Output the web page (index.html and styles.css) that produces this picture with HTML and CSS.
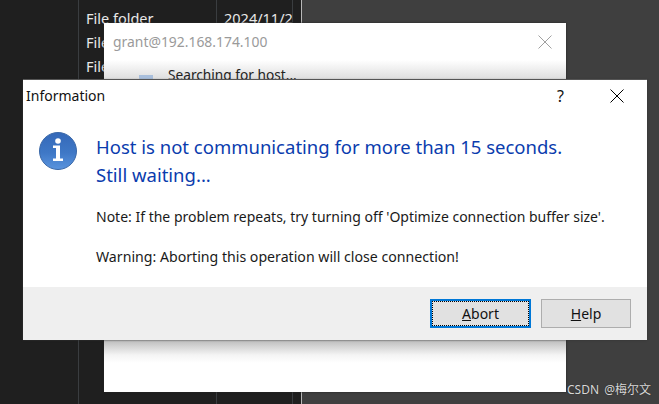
FILE: index.html
```html
<!DOCTYPE html>
<html>
<head>
    <title>Information</title>
    <link rel="stylesheet" href="styles.css">
</head>
<body>
    <div class="file-list">
        <div class="col col-type">
            <div class="cell">File folder</div>
            <div class="cell">File</div>
            <div class="cell">File</div>
        </div>
        <div class="col col-date">
            <div class="cell">2024/11/2</div>
        </div>
        <div class="col col-size"></div>
    </div>
    <div class="right-pane"></div>

    <div class="window back-window">
        <div class="back-title">
            <span>grant@192.168.174.100</span>
            <svg class="back-close" width="14" height="14" viewBox="0 0 14 14">
                <path d="M0.5 0.5L13.5 13.5M13.5 0.5L0.5 13.5" stroke="#a0a0a0" stroke-width="1" fill="none"/>
            </svg>
        </div>
        <div class="back-status">
            <svg class="back-icon" width="16" height="16" viewBox="0 0 16 16">
                <path d="M1 1H15V12L10 16H5L1 4Z" fill="#a9bfdc"/>
            </svg>
            <span>Searching for host...</span>
        </div>
    </div>

    <div class="window dialog">
        <div class="title-bar">
            <span class="title-text">Information</span>
            <span class="help-mark">?</span>
            <svg class="close-icon" width="14" height="14" viewBox="0 0 14 14">
                <path d="M0.5 0.5L13.5 13.5M13.5 0.5L0.5 13.5" stroke="#000" stroke-width="1" fill="none"/>
            </svg>
        </div>
        <div class="dialog-body">
            <svg class="info-icon" width="40" height="40" viewBox="0 0 40 40">
                <defs>
                    <linearGradient id="infoFill" x1="0" y1="0" x2="0" y2="1">
                        <stop offset="0" stop-color="#3468b8"/>
                        <stop offset="0.55" stop-color="#3f78c6"/>
                        <stop offset="1" stop-color="#5a94de"/>
                    </linearGradient>
                </defs>
                <circle cx="20" cy="20" r="18.5" fill="url(#infoFill)" stroke="#3a68a8" stroke-width="1"/>
                <circle cx="20" cy="10" r="2.8" fill="#fff"/>
                <path d="M15 14.5H22V27.5H25V30H15V27.5H18V17H15Z" fill="#fff"/>
            </svg>
            <div class="message">
                <div class="headline">Host is not communicating for more than 15 seconds.<br>Still waiting...</div>
                <p class="note">Note: If the problem repeats, try turning off 'Optimize connection buffer size'.</p>
                <p class="warn">Warning: Aborting this operation will close connection!</p>
            </div>
        </div>
        <div class="dialog-footer">
            <button class="btn btn-focus" type="button"><span class="btn-inner"><u>A</u>bort</span></button>
            <button class="btn" type="button"><span class="btn-inner"><u>H</u>elp</span></button>
        </div>
    </div>

    <div class="watermark">CSDN @梅尔文</div>
</body>
</html>
```

FILE: styles.css
```css
html, body {
    margin: 0;
    padding: 0;
}
body {
    width: 659px;
    height: 404px;
    position: relative;
    overflow: hidden;
    background-color: #1f1f1f;
    font-family: "Noto Sans", "Noto Sans CJK SC", sans-serif;
    display: flex;
}
.file-list {
    display: flex;
    margin-left: 78px;
    width: 224px;
    height: 404px;
    color: #e8e8e8;
    font-size: 14.5px;
}
.col {
    border-left: 1px solid #3a3d40;
    box-sizing: border-box;
    padding: 10px 0 0 7px;
    overflow: hidden;
    white-space: nowrap;
}
.col-type {
    width: 138px;
}
.col-date {
    width: 76px;
}
.col-size {
    width: 10px;
    padding: 0;
    border-right: 1px solid #b8b8b8;
}
.cell {
    height: 24px;
    line-height: 16px;
}
.right-pane {
    flex: 1;
    background-color: #3f3f3f;
}
.window {
    position: absolute;
    box-sizing: border-box;
    background: #fff;
}
.back-window {
    left: 104px;
    top: 23px;
    width: 462px;
    height: 369px;
    box-shadow: 0 0 2px #222;
    background: linear-gradient(to bottom, #fff 0, #fff 37px, #dcdcdc 57px, #dcdcdc 317px, #bcbcbc 317px, #f4f4f4 332px, #fff 340px);
}
.back-title {
    display: flex;
    align-items: center;
    justify-content: space-between;
    height: 37px;
    padding: 0 14px 0 9px;
    color: #9a9a9a;
    font-size: 13.9px;
}
.back-status {
    display: flex;
    gap: 14px;
    padding: 5px 0 0 34px;
    color: #222;
    font-size: 13.7px;
}
.back-icon {
    margin-top: 9px;
}
.dialog {
    left: 23px;
    top: 80px;
    width: 624px;
    height: 260px;
    display: flex;
    flex-direction: column;
    box-shadow: 0 0 2px #333, 0 -1px 0 #666;
}
.title-bar {
    display: flex;
    align-items: center;
    height: 31px;
    padding: 0 23px 0 3px;
    color: #111;
    font-size: 14px;
}
.title-text {
    flex: 1;
}
.help-mark {
    margin-right: 46px;
    font-size: 16px;
}
.dialog-body {
    flex: 1;
    display: flex;
    align-items: flex-start;
    padding: 22px 0 0 15px;
}
.info-icon {
    flex: none;
    margin: -2px 18px 0 0;
}
.message {
    color: #1a1a1a;
    font-size: 14px;
}
.headline {
    color: #0a3cae;
    font-size: 18.5px;
    line-height: 28px;
}
.note {
    margin: 18px 0 0;
    line-height: 19px;
}
.warn {
    margin: 21px 0 0;
    line-height: 19px;
    font-size: 14.15px;
}
.dialog-footer {
    height: 53px;
    background: #efefef;
    display: flex;
    justify-content: flex-end;
    align-items: flex-start;
    gap: 10px;
    padding: 12px 16px 0 0;
    box-sizing: border-box;
}
.btn {
    width: 90px;
    height: 29px;
    padding: 0;
    margin: 0;
    box-sizing: border-box;
    border: 1px solid #adadad;
    background: #e1e1e1;
    color: #111;
    font-family: inherit;
    font-size: 14px;
}
.btn-inner {
    display: block;
    line-height: 25px;
}
.btn-focus {
    width: 101px;
    border: 2px solid #0078d7;
}
.btn-focus .btn-inner {
    height: 23px;
    line-height: 23px;
    border: 1px dotted #000;
}
.watermark {
    position: absolute;
    right: 8px;
    bottom: 6px;
    color: #d8d8d8;
    font-size: 12px;
    word-spacing: 2px;
    text-shadow: 0 0 1px #222;
}
```
